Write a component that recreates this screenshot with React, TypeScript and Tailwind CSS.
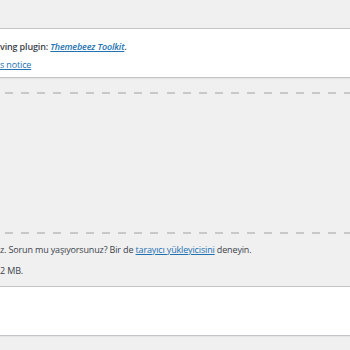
export default function App() {
  const dash =
    "h-[2px] bg-[repeating-linear-gradient(90deg,transparent_0_5px,#c8c8c9_5px_13px,transparent_13px_16.16px)]";

  return (
    <div className="w-[350px] h-[350px] overflow-hidden bg-[#f0f0f1] text-[#3c434a] font-['Open_Sans',sans-serif] text-[9px] tracking-[-0.15px]">
      {/* top spacing */}
      <div className="h-[28px]" />

      {/* plugin notice */}
      <div className="h-[50px] border-y border-[#c3c4c7] bg-white shadow-[0_1px_1px_rgba(0,0,0,0.04)] pt-[9px]">
        <p className="leading-[18px] whitespace-nowrap font-semibold">
          ving plugin:{" "}
          <em>
            <a href="#" className="text-[#2271b1] underline">
              Themebeez Toolkit
            </a>
          </em>
          .
        </p>
        <p className="leading-[18px] whitespace-nowrap">
          <a href="#" className="text-[#2271b1] underline">
            s notice
          </a>
        </p>
      </div>

      {/* drag & drop area */}
      <div className="mt-[14px]">
        <div className={dash} />
        <div className="h-[138px]" />
        <div className={dash} />
      </div>

      {/* uploader help text */}
      <div className="pt-[9px]">
        <p className="leading-[14px] whitespace-nowrap">
          z. Sorun mu yaşıyorsunuz? Bir de{" "}
          <a href="#" className="text-[#2271b1] underline">
            tarayıcı yükleyicisini
          </a>{" "}
          deneyin.
        </p>
        <p className="mt-[7px] leading-[14px] whitespace-nowrap">2 MB.</p>
      </div>

      {/* bottom box */}
      <div className="mt-[8px] h-[50px] border-y border-[#c3c4c7] bg-white shadow-[0_1px_1px_rgba(0,0,0,0.04)]" />
    </div>
  );
}
